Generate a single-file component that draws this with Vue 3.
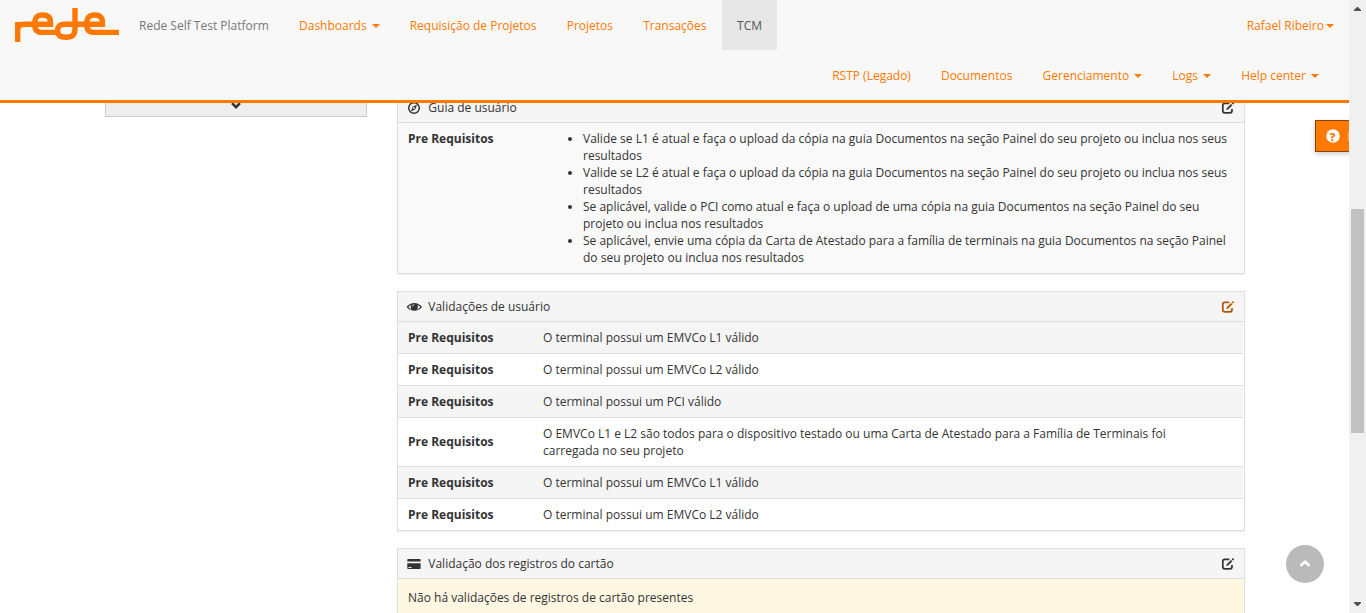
<script setup>
const leftNav = [
  { label: 'Dashboards', caret: true },
  { label: 'Requisição de Projetos' },
  { label: 'Projetos' },
  { label: 'Transações' },
  { label: 'TCM', active: true },
]
const rightNav = [
  { label: 'RSTP (Legado)' },
  { label: 'Documentos' },
  { label: 'Gerenciamento', caret: true },
  { label: 'Logs', caret: true },
  { label: 'Help center', caret: true },
]
const guide = [
  'Valide se L1 é atual e faça o upload da cópia na guia Documentos na seção Painel do seu projeto ou inclua nos seus resultados',
  'Valide se L2 é atual e faça o upload da cópia na guia Documentos na seção Painel do seu projeto ou inclua nos seus resultados',
  'Se aplicável, valide o PCI como atual e faça o upload de uma cópia na guia Documentos na seção Painel do seu projeto ou inclua nos resultados',
  'Se aplicável, envie uma cópia da Carta de Atestado para a família de terminais na guia Documentos na seção Painel do seu projeto ou inclua nos resultados',
]
const validations = [
  'O terminal possui um EMVCo L1 válido',
  'O terminal possui um EMVCo L2 válido',
  'O terminal possui um PCI válido',
  'O EMVCo L1 e L2 são todos para o dispositivo testado ou uma Carta de Atestado para a Família de Terminais foi carregada no seu projeto',
  'O terminal possui um EMVCo L1 válido',
  'O terminal possui um EMVCo L2 válido',
]
const panels = [
  { key: 'guide', title: 'Guia de usuário' },
  { key: 'checks', title: 'Validações de usuário', hot: true },
  { key: 'card', title: 'Validação dos registros do cartão' },
]
</script>

<template>
  <div class="screen">
    <div class="page">
      <header class="navbar">
        <div class="bar">
          <svg class="logo" viewBox="0 0 106 36" width="106" height="36" aria-label="rede">
            <g fill="none" stroke="#ff7800" stroke-width="5.400">
              <path d="M3.700 35V15" />
              <path d="M3.700 22C3.700 18.500 6 17.200 10 17.200H36.500V15C36.500 10 33.500 8 28.500 8C22.500 8 20.700 11 20.700 17.200C20.700 23.500 24 25.400 28 25.400H42" />
              <path d="M61 1V22C61 28.500 57.500 30.300 52.200 30.300C46.500 30.300 43.600 28.500 43.600 23.800C43.600 19 46 17.200 51 17.200H88.400V15C88.400 10 85.500 8 80.500 8C74.500 8 72.700 11 72.700 17.200C72.700 23.500 76 25.400 80 25.400H105" />
            </g>
          </svg>
          <span class="brand">Rede Self Test Platform</span>
          <nav class="links">
            <a v-for="n in leftNav" :key="n.label" :class="{ active: n.active }">{{ n.label }}<i v-if="n.caret" class="caret"></i></a>
          </nav>
          <a class="user">Rafael Ribeiro<i class="caret"></i></a>
        </div>
        <nav class="links second">
          <a v-for="n in rightNav" :key="n.label">{{ n.label }}<i v-if="n.caret" class="caret"></i></a>
        </nav>
      </header>

      <main class="body">
        <aside class="side">
          <svg width="12" height="12" viewBox="0 0 12 12"><path d="M2 4.200L6 8.200L10 4.200" fill="none" stroke="#333" stroke-width="2.600" /></svg>
        </aside>
        <div class="panels">
          <section v-for="p in panels" :key="p.key" class="panel">
            <div class="head">
              <svg v-if="p.key === 'guide'" class="icon" viewBox="0 0 14 14">
                <circle cx="7" cy="7" r="5.300" fill="none" stroke="#333" stroke-width="1.500" />
                <path d="M10.200 3.600L8.400 8.200L3.800 10.400L5.600 5.800Z" fill="#333" />
                <circle cx="7" cy="7" r="0.900" fill="#f5f5f5" />
              </svg>
              <svg v-else-if="p.key === 'checks'" class="icon" viewBox="0 0 14 14">
                <path d="M-0.400 7C3.600 1.500 11 1.500 15 7C11 12 3.600 12 -0.400 7Z" fill="#333" />
                <path d="M1.300 7C2.200 5.900 3.100 5.200 4.100 4.700C3.400 6.500 3.600 8.200 4.600 9.700C3.300 9.100 2.200 8.200 1.300 7ZM13.300 7C12.400 5.900 11.500 5.200 10.500 4.700C11.200 6.500 11 8.200 10 9.700C11.300 9.100 12.400 8.200 13.300 7Z" fill="#f5f5f5" />
                <path d="M5.500 6.400C5.600 5.400 6.200 4.800 7.200 4.600" stroke="#f5f5f5" stroke-width="0.900" fill="none" />
              </svg>
              <svg v-else class="icon" viewBox="0 0 14 14">
                <path d="M1 2H13Q13.600 2 13.600 2.700V4.500H0.300V2.700Q0.300 2 1 2ZM0.300 6.300H13.600V11.300Q13.600 12 13 12H1Q0.300 12 0.300 11.300Z" fill="#333" />
                <path d="M1.500 10.500H4.500" stroke="#f5f5f5" stroke-width="1" />
              </svg>
              <span class="title">{{ p.title }}</span>
              <svg class="edit" :class="{ hot: p.hot }" viewBox="0 0 14 14">
                <path d="M8.300 2.300H3.800Q1.800 2.300 1.800 4.300V9.800Q1.800 11.800 3.800 11.800H9Q11 11.800 11 9.800V8" fill="none" stroke="currentColor" stroke-width="1.700" />
                <path d="M5.200 9.100L5.700 7.200L10 2.900L11.400 4.300L7.100 8.600ZM10.600 2.200L11.500 1.300Q11.800 1 12.100 1.300L12.900 2.100Q13.200 2.400 12.900 2.700L12 3.600Z" fill="currentColor" />
              </svg>
            </div>
            <div v-if="p.key === 'guide'" class="row tinted">
              <b>Pre Requisitos</b>
              <ul><li v-for="g in guide" :key="g">{{ g }}</li></ul>
            </div>
            <div v-else-if="p.key === 'checks'" class="rows">
              <div v-for="(v, i) in validations" :key="i" class="row" :class="{ striped: i % 2 === 0 }">
                <b>Pre Requisitos</b><span class="value">{{ v }}</span>
              </div>
            </div>
            <div v-else class="notice">Não há validações de registros de cartão presentes</div>
          </section>
        </div>
      </main>

      <div class="help">
        <svg width="14" height="14" viewBox="0 0 14 14"><circle cx="7" cy="7" r="6.800" fill="#fff" /></svg>
        <span class="mark">?</span>
        <span class="sliver"></span>
      </div>
      <div class="top">
        <svg width="14" height="14" viewBox="0 0 14 14"><path d="M2.500 8.800L7 4.800L11.500 8.800" fill="none" stroke="#fff" stroke-width="2.800" /></svg>
      </div>
    </div>
    <div class="scroll">
      <svg class="up" width="7" height="4" viewBox="0 0 7 4"><path d="M3 0H4L7 3V4H0V3Z" fill="#505050" /></svg>
      <div class="thumb"></div>
      <svg class="down" width="7" height="4" viewBox="0 0 7 4"><path d="M0 0H7V1L4 4H3L0 1Z" fill="#505050" /></svg>
    </div>
  </div>
</template>

<style>
body { margin: 0; overflow: hidden; }
</style>

<style scoped>
* { box-sizing: border-box; }
.screen {
  display: flex; width: 1366px; height: 613px; background: #fff; overflow: hidden;
  font: 12px/17px "Open Sans", "Noto Sans", sans-serif; color: #333;
}
.page { position: relative; width: 1349px; height: 613px; overflow: hidden; }
.navbar { height: 103px; background: #f8f8f8; border-bottom: 3px solid #ff7800; color: #ff7800; }
.bar { display: flex; height: 50px; padding-left: 14px; }
.logo { margin-top: 7px; }
.brand { margin-left: 19px; line-height: 52px; color: #777; width: 145px; white-space: nowrap; }
.links { display: flex; }
.links a { padding: 0 15px; line-height: 52px; height: 50px; white-space: nowrap; }
.links a:nth-child(n + 3) { margin-left: 0.15px; }
.links a.active { background: #e7e7e7; color: #555; margin-left: 0.5px; }
.second { justify-content: flex-end; padding-right: 15px; }
.user { margin-left: auto; margin-right: 15px; line-height: 52px; }
.caret {
  display: inline-block; border: 4px solid transparent; border-top-color: currentColor;
  border-bottom: 0; vertical-align: middle; margin: 0 0 2px 5px;
}
.user .caret { margin-left: 2px; }
.body { display: flex; height: 510px; overflow: hidden; align-items: flex-start; }
.side {
  margin-left: 105px; width: 262px; height: 14px; background: #eee;
  border: 1px solid #ccc; border-top: 0; display: flex; justify-content: center; align-items: flex-start;
}
.side svg { margin-top: -4px; }
.panels { margin: -11px 0 0 30px; width: 848px; }
.panel { border: 1px solid #ddd; margin-bottom: 17px; box-shadow: 0 1px 1px rgba(0, 0, 0, .05); background: #fff; }
.head {
  height: 30px; padding: 6px 9px 0; background: #f5f5f5; border-bottom: 1px solid #ddd;
  display: flex; align-items: flex-start;
}
.icon { width: 14px; height: 14px; margin-top: 2px; overflow: visible; }
.title { margin-left: 7.300px; }
.edit { width: 14px; height: 14px; margin-left: auto; margin-top: 2px; }
.edit.hot { color: #b35400; }
.row { display: flex; align-items: center; padding: 7px 10px; margin-right: 1px; }
.row b { width: 135px; flex: none; margin-bottom: 1px; margin-top: -1px; }
.row ul { margin: 0; padding: 0 0 0 40px; flex: 1; }
.tinted { background: #f9f9f9; align-items: flex-start; }
.tinted b { margin: 0; }
.striped { background: #f5f5f5; }
.rows .row + .row { border-top: 1px solid #ddd; }
.rows .row b { margin: 0; position: relative; }
.rows .row:nth-child(4) b { margin-bottom: 1px; }
.value { max-width: 660px; }
.notice { background: #fef7e2; padding: 10px 10px 20px; }
.help {
  position: absolute; left: 1315px; top: 120px; width: 60px; height: 32px; background: #ff7800;
  border: 1px solid #8a4100; box-shadow: 0 2px 5px rgba(0, 0, 0, .2); display: flex; align-items: center; padding-left: 9.500px;
}
.mark { width: 14px; margin-left: -14px; text-align: center; color: #ff7800; font-weight: 800; font-size: 11px; }
.sliver { width: 1px; height: 9px; margin-left: 8.500px; background: #ffae66; }
.top {
  position: absolute; left: 1286px; top: 545px; width: 38px; height: 38px; border-radius: 50%;
  background: #bababa; display: flex; align-items: center; justify-content: center;
}
.scroll {
  width: 17px; height: 613px; background: #f0f0f0; display: flex; flex-direction: column; align-items: center;
}
.up { margin-top: 7px; }
.down { margin: auto 0 7px; }
.thumb { width: 13px; height: 224px; margin-top: 198px; background: #c1c1c1; }
</style>
